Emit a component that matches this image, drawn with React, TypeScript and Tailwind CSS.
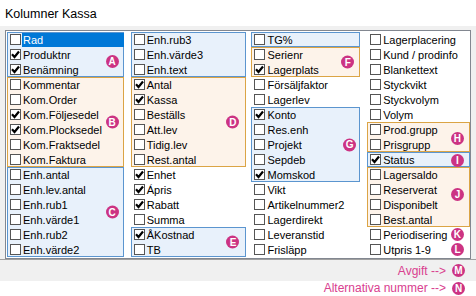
import type { ReactNode } from 'react';

type Item = [string, boolean];

interface Segment {
  tone?: 'blue' | 'orange';
  badge?: string;
  badgePos?: string;
  items: Item[];
}

const columns: { width: string; segments: Segment[] }[] = [
  {
    width: 'w-[117px]',
    segments: [
      { tone: 'blue', badge: 'A', badgePos: 'top-[23px] right-[5px]', items: [['Rad', false], ['Produktnr', true], ['Benämning', true]] },
      {
        tone: 'orange',
        badge: 'B',
        badgePos: 'top-1/2 -translate-y-1/2 right-[5px]',
        items: [
          ['Kommentar', false],
          ['Kom.Order', false],
          ['Kom.Följesedel', true],
          ['Kom.Plocksedel', true],
          ['Kom.Fraktsedel', false],
          ['Kom.Faktura', false],
        ],
      },
      {
        tone: 'blue',
        badge: 'C',
        badgePos: 'top-1/2 -translate-y-1/2 right-[5px]',
        items: [
          ['Enh.antal', false],
          ['Enh.lev.antal', false],
          ['Enh.rub1', false],
          ['Enh.värde1', false],
          ['Enh.rub2', false],
          ['Enh.värde2', false],
        ],
      },
    ],
  },
  {
    width: 'w-[116px]',
    segments: [
      { tone: 'blue', items: [['Enh.rub3', false], ['Enh.värde3', false], ['Enh.text', false]] },
      {
        tone: 'orange',
        badge: 'D',
        badgePos: 'top-1/2 -translate-y-1/2 right-[7px]',
        items: [
          ['Antal', true],
          ['Kassa', true],
          ['Beställs', false],
          ['Att.lev', false],
          ['Tidig.lev', false],
          ['Rest.antal', false],
        ],
      },
      { items: [['Enhet', true], ['Ápris', true], ['Rabatt', true], ['Summa', false]] },
      { tone: 'blue', badge: 'E', badgePos: 'top-1/2 -translate-y-1/2 right-[7px]', items: [['ÅKostnad', true], ['TB', false]] },
    ],
  },
  {
    width: 'w-[109px]',
    segments: [
      { tone: 'blue', items: [['TG%', false]] },
      { tone: 'orange', badge: 'F', badgePos: 'top-1/2 -translate-y-1/2 right-[6px]', items: [['Serienr', false], ['Lagerplats', true]] },
      { items: [['Försäljfaktor', false], ['Lagerlev', false]] },
      {
        tone: 'blue',
        badge: 'G',
        badgePos: 'top-1/2 -translate-y-1/2 right-[4px]',
        items: [
          ['Konto', true],
          ['Res.enh', false],
          ['Projekt', false],
          ['Sepdeb', false],
          ['Momskod', true],
        ],
      },
      {
        items: [
          ['Vikt', false],
          ['Artikelnummer2', false],
          ['Lagerdirekt', false],
          ['Leveranstid', false],
          ['Frisläpp', false],
        ],
      },
    ],
  },
  {
    width: 'w-[103px]',
    segments: [
      {
        items: [
          ['Lagerplacering', false],
          ['Kund / prodinfo', false],
          ['Blankettext', false],
          ['Styckvikt', false],
          ['Styckvolym', false],
          ['Volym', false],
        ],
      },
      { tone: 'orange', badge: 'H', badgePos: 'top-[10px] right-[6px]', items: [['Prod.grupp', false], ['Prisgrupp', false]] },
      { tone: 'blue', badge: 'I', badgePos: 'top-[2px] right-[6px]', items: [['Status', true]] },
      {
        tone: 'orange',
        badge: 'J',
        badgePos: 'top-[21px] right-[6px]',
        items: [
          ['Lagersaldo', false],
          ['Reserverat', false],
          ['Disponibelt', false],
          ['Best.antal', false],
        ],
      },
      { badge: 'K', badgePos: 'top-[1px] right-[6px]', items: [['Periodisering', false]] },
      { badge: 'L', badgePos: 'top-[1px] right-[6px]', items: [['Utpris 1-9', false]] },
    ],
  },
];

function Badge({ letter, className = '' }: { letter: string; className?: string }) {
  return (
    <span
      className={`flex h-[13px] w-[13px] items-center justify-center rounded-full bg-[#cc3383] text-[10px] font-bold leading-none text-white ${className}`}
    >
      {letter}
    </span>
  );
}

function Checkbox({ checked }: { checked: boolean }) {
  return (
    <span className="flex h-[11px] w-[11px] shrink-0 items-center justify-center border border-[#555] bg-white">
      {checked && (
        <svg width="9" height="9" viewBox="0 0 9 9">
          <path d="M1 4.3 L3.5 7 L8 1.5" fill="none" stroke="#000" strokeWidth="2.2" />
        </svg>
      )}
    </span>
  );
}

function Row({ label, checked, selected }: { label: string; checked: boolean; selected?: boolean }) {
  return (
    <div className="flex h-[15px] items-center pl-[3px]">
      <Checkbox checked={checked} />
      <span
        className={`ml-[1px] h-[14px] flex-1 whitespace-nowrap pl-[1px] leading-[14px] ${
          selected ? 'bg-[#0078d7] text-white' : 'text-black'
        }`}
      >
        {label}
      </span>
    </div>
  );
}

function Group({ seg, children }: { seg: Segment; children: ReactNode }) {
  const tone =
    seg.tone === 'blue'
      ? 'bg-[#e8f1fb] ring-1 ring-inset ring-[#5b95cf]'
      : seg.tone === 'orange'
        ? 'bg-[#fdf3ea] ring-1 ring-inset ring-[#dba445]'
        : '';
  return (
    <div className={`relative ${tone}`}>
      {children}
      {seg.badge && <Badge letter={seg.badge} className={`absolute ${seg.badgePos}`} />}
    </div>
  );
}

export default function App() {
  return (
    <div className="flex h-[296px] w-[476px] flex-col bg-[#f0f0f0] font-['Liberation_Sans',Arial,sans-serif] text-[11px]">
      <div className="flex h-[26px] items-center bg-white pl-[5px] pt-[2px] text-[12.5px] text-black">Kolumner Kassa</div>

      <div className="px-[5px] pt-[4px]">
        <div className="flex h-[229px] border border-[#828790] bg-white pl-[1px] pt-[1px]">
          {columns.map((col, ci) => (
            <div key={ci} className={`${col.width} ${ci === 1 ? 'ml-[7px]' : ci === 2 ? 'ml-[5px]' : ci === 3 ? 'ml-[7px]' : ''}`}>
              {col.segments.map((seg, si) => (
                <Group key={si} seg={seg}>
                  {seg.items.map(([label, checked]) => (
                    <Row key={label} label={label} checked={checked} selected={label === 'Rad'} />
                  ))}
                </Group>
              ))}
            </div>
          ))}
        </div>
      </div>

      <div className="h-px bg-[#a0a0a0]" />

      <div className="flex h-[21px] items-center justify-end gap-[6px] pr-[11px] text-[12px] text-[#d9408f]">
        <span>Avgift --&gt;</span>
        <Badge letter="M" />
      </div>
      <div className="flex flex-1 items-start justify-end gap-[6px] bg-white pr-[11px] text-[12px] text-[#d9408f]">
        <span className="leading-[14px]">Alternativa nummer --&gt;</span>
        <Badge letter="N" className="mt-[1px]" />
      </div>
    </div>
  );
}
